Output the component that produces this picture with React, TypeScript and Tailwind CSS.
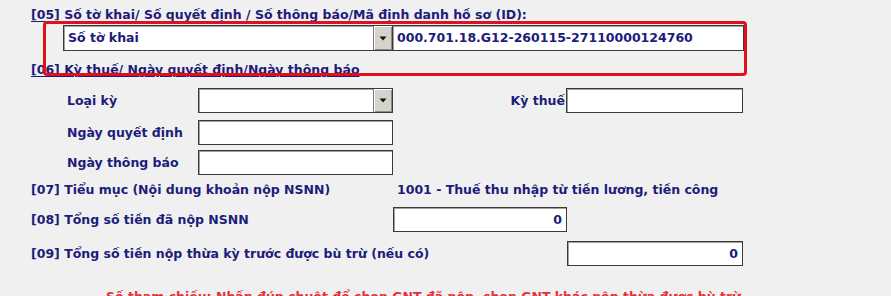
import React from 'react';
import clsx from 'clsx';

const font = { fontFamily: '"DejaVu Sans", Verdana, sans-serif' };

const Arrow = () => (
  <div className="flex h-full w-[19px] shrink-0 items-center justify-center border-l border-[#7a7a7a] bg-[#d6d3cc] shadow-[inset_1px_1px_0_#ffffff,inset_-1px_-1px_0_#8a8a8a]">
    <svg width="8" height="5" viewBox="0 0 8 5">
      <path d="M0.5 0.5h7l-3.5 4z" fill="#111" />
    </svg>
  </div>
);

interface BoxProps {
  className?: string;
  children?: React.ReactNode;
  select?: boolean;
  right?: boolean;
}

const Box = ({ className, children, select, right }: BoxProps) => (
  <div
    className={clsx(
      'flex shrink-0 items-center border border-[#3a3a3a] bg-white shadow-[inset_1px_1px_0_#a0a0a0]',
      className,
    )}
  >
    <div
      className={clsx(
        'flex-1 truncate px-[4px]',
        right ? 'text-right' : 'text-left',
      )}
    >
      {children}
    </div>
    {select && <Arrow />}
  </div>
);

export default function App() {
  return (
    <div
      className="relative h-[296px] w-[891px] overflow-hidden bg-[#f0f0f0] text-[12.5px] font-bold leading-[16px] text-[#1c1c7a]"
      style={font}
    >
      <div className="flex flex-col pl-[31px] pt-[7px]">
        <div className="underline decoration-1 underline-offset-[2px]">
          [05] Số tờ khai/ Số quyết định / Số thông báo/Mã định danh hồ sơ (ID):
        </div>

        <div className="ml-[32px] mt-[2px] flex h-[26px]">
          <Box select className="h-full w-[330px]">
            Số tờ khai
          </Box>
          <Box className="-ml-px h-full w-[352px]">
            000.701.18.G12-260115-27110000124760
          </Box>
        </div>

        <div className="mt-[11px] underline decoration-1 underline-offset-[2px]">
          [06] Kỳ thuế/ Ngày quyết định/Ngày thông báo
        </div>

        <div className="mt-[10px] flex h-[25px] items-center">
          <div className="w-[167px] pl-[36px]">Loại kỳ</div>
          <Box select className="h-full w-[195px]" />
          <div className="w-[173px] pr-[1px] text-right">Kỳ thuế</div>
          <Box className="h-full w-[177px]" />
        </div>

        <div className="mt-[7px] flex h-[25px] items-center">
          <div className="w-[167px] pl-[36px]">Ngày quyết định</div>
          <Box className="h-full w-[195px]" />
        </div>

        <div className="mt-[5px] flex h-[25px] items-center">
          <div className="w-[167px] pl-[36px]">Ngày thông báo</div>
          <Box className="h-full w-[195px]" />
        </div>

        <div className="mt-[7px] flex items-center">
          <div className="w-[366px]">[07] Tiểu mục (Nội dung khoản nộp NSNN)</div>
          <div>1001 - Thuế thu nhập từ tiền lương, tiền công</div>
        </div>

        <div className="mt-[9px] flex h-[25px] items-center">
          <div className="w-[362px]">[08] Tổng số tiền đã nộp NSNN</div>
          <Box right className="h-full w-[174px]">
            0
          </Box>
        </div>

        <div className="mt-[9px] flex h-[25px] items-center">
          <div className="w-[536px]">[09] Tổng số tiền nộp thừa kỳ trước được bù trừ (nếu có)</div>
          <Box right className="h-full w-[176px]">
            0
          </Box>
        </div>

        <div className="ml-[75px] mt-[23px] whitespace-nowrap text-[#e5303a]">
          Số tham chiếu: Nhấn đúp chuột để chọn GNT đã nộp, chọn GNT khác nộp thừa được bù trừ
        </div>
      </div>

      <div className="pointer-events-none absolute left-[43px] top-[21px] h-[55px] w-[704px] rounded-[4px] border-[3px] border-[#e2101c]" />
    </div>
  );
}
